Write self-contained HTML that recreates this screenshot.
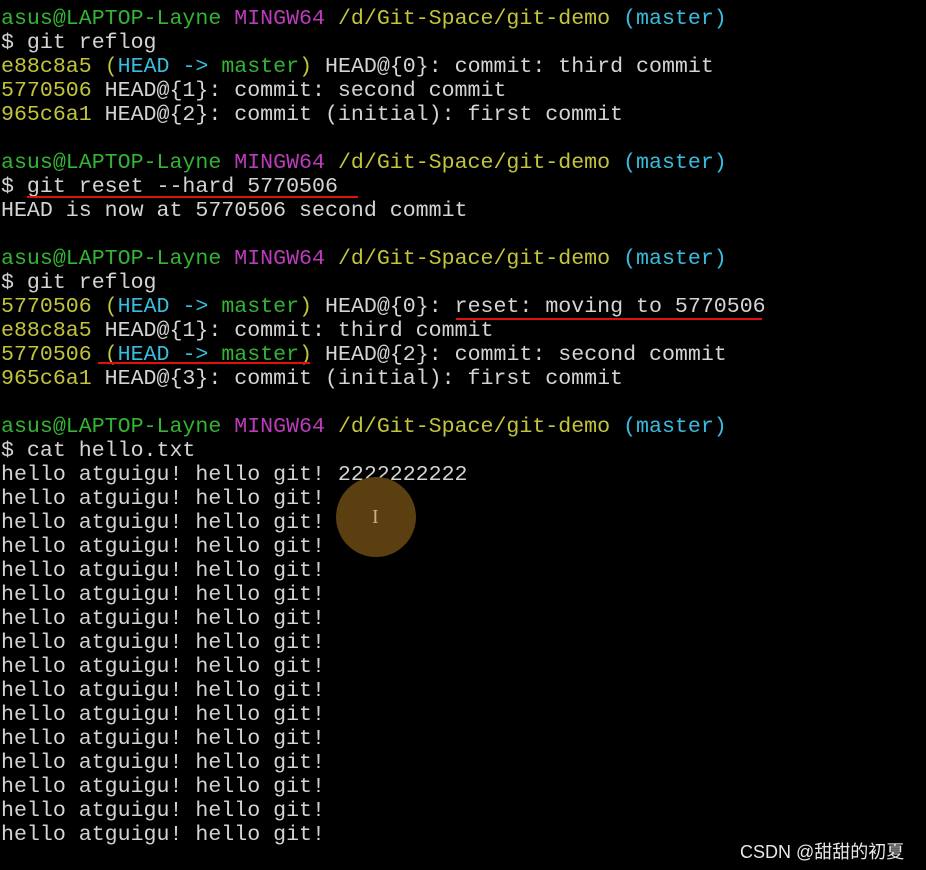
<!DOCTYPE html>
<html><head><meta charset="utf-8"><style>
body{margin:0;background:#000;width:926px;height:870px;overflow:hidden;position:relative}
pre{margin:0;position:absolute;left:1px;top:7px;font-family:"Liberation Mono","DejaVu Sans Mono",monospace;font-size:21.6px;line-height:24px;color:#d4d4d4;letter-spacing:0}
.g{color:#33b433}.m{color:#bb3cbb}.y{color:#c4c43c}.c{color:#38bde0}
.u{position:absolute;height:2px;background:#e01010}
.dot{position:absolute;left:336px;top:477px;width:80px;height:80px;border-radius:50%;background:#5c3f10}
.cur{position:absolute;left:372px;top:506px;color:#c8b080;font-family:"Liberation Serif",serif;font-size:20px}
.wm{position:absolute;left:740px;top:838px;color:#e8e8e8;font-family:"Liberation Sans","Noto Sans CJK SC",sans-serif;font-size:18px}
</style></head><body>
<pre><span class="g">asus@LAPTOP-Layne</span> <span class="m">MINGW64</span> <span class="y">/d/Git-Space/git-demo</span> <span class="c">(master)</span>
$ git reflog
<span class="y">e88c8a5</span> <span class="y">(</span><span class="c">HEAD -&gt; </span><span class="g">master</span><span class="y">)</span> HEAD@{0}: commit: third commit
<span class="y">5770506</span> HEAD@{1}: commit: second commit
<span class="y">965c6a1</span> HEAD@{2}: commit (initial): first commit

<span class="g">asus@LAPTOP-Layne</span> <span class="m">MINGW64</span> <span class="y">/d/Git-Space/git-demo</span> <span class="c">(master)</span>
$ git reset --hard 5770506
HEAD is now at 5770506 second commit

<span class="g">asus@LAPTOP-Layne</span> <span class="m">MINGW64</span> <span class="y">/d/Git-Space/git-demo</span> <span class="c">(master)</span>
$ git reflog
<span class="y">5770506</span> <span class="y">(</span><span class="c">HEAD -&gt; </span><span class="g">master</span><span class="y">)</span> HEAD@{0}: reset: moving to 5770506
<span class="y">e88c8a5</span> HEAD@{1}: commit: third commit
<span class="y">5770506</span> <span class="y">(</span><span class="c">HEAD -&gt; </span><span class="g">master</span><span class="y">)</span> HEAD@{2}: commit: second commit
<span class="y">965c6a1</span> HEAD@{3}: commit (initial): first commit

<span class="g">asus@LAPTOP-Layne</span> <span class="m">MINGW64</span> <span class="y">/d/Git-Space/git-demo</span> <span class="c">(master)</span>
$ cat hello.txt
hello atguigu! hello git! 2222222222
hello atguigu! hello git!
hello atguigu! hello git!
hello atguigu! hello git!
hello atguigu! hello git!
hello atguigu! hello git!
hello atguigu! hello git!
hello atguigu! hello git!
hello atguigu! hello git!
hello atguigu! hello git!
hello atguigu! hello git!
hello atguigu! hello git!
hello atguigu! hello git!
hello atguigu! hello git!
hello atguigu! hello git!
hello atguigu! hello git!</pre>
<div class="u" style="left:27px;top:196px;width:331px"></div>
<div class="u" style="left:456px;top:318px;width:306px"></div>
<div class="u" style="left:98px;top:362px;width:212px"></div>
<div class="dot"></div><div class="cur">I</div>
<div class="wm">CSDN @甜甜的初夏</div>
</body></html>
